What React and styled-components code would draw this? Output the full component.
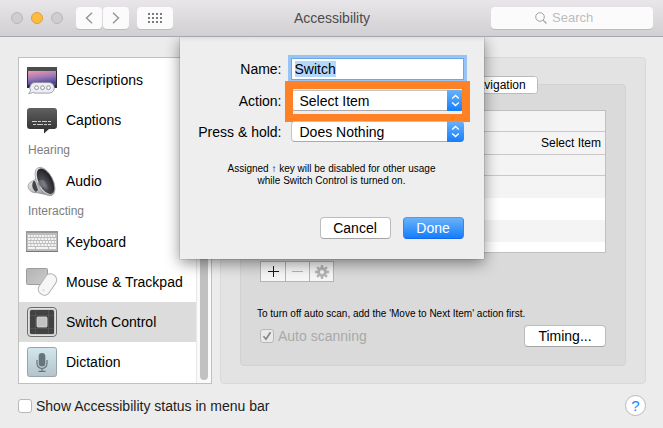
import React from "react";
import styled, { createGlobalStyle, css } from "styled-components";

const GlobalStyle = createGlobalStyle`
	* {
		box-sizing: border-box;
	}
	body {
		margin: 0;
		background: #ececec;
	}
	body, button, input, select {
		font-family: "Liberation Sans", Arial, sans-serif;
		font-size: 14px;
		line-height: 16px;
		color: #000;
	}
	svg {
		display: block;
		flex: none;
	}
`;

const Window = styled.div`
		position: relative;
		display: flex;
		flex-direction: column;
		min-height: 100vh;
		background: #ececec;
	`,
	Toolbar = styled.header`
		display: grid;
		grid-template-columns: 1fr auto 1fr;
		align-items: center;
		height: 37px;
		padding: 0 10px 0 11px;
		background: linear-gradient(#e8e6e9, #d1cfd2);
		border-bottom: 1px solid #a9a7ab;
	`,
	Title = styled.h1`
		margin: 0;
		font-size: 14px;
		font-weight: 400;
		color: #4c4b4d;
	`,
	ToolGroup = styled.div`
		display: flex;
		align-items: center;
	`,
	Light = styled.button`
		width: 12px;
		height: 12px;
		margin-right: 8px;
		padding: 0;
		border: 1px solid ${(p) => (p.$on ? "#dfa034" : "#b9b7ba")};
		border-radius: 50%;
		background: ${(p) => (p.$on ? "#fdbc40" : "#cfcdd0")};
	`,
	ToolButton = styled.button`
		display: flex;
		align-items: center;
		justify-content: center;
		width: ${(p) => (p.$wide ? 36 : 26)}px;
		height: 22px;
		margin-left: ${(p) => p.$gap || 0}px;
		padding: 0;
		border: 0;
		border-radius: 4px;
		background: #fcfbfc;
		box-shadow: 0 1px 0 #bcbabd;
		color: ${(p) => (p.$wide ? "#7b7a7c" : "#979698")};
	`,
	SearchBox = styled.label`
		display: flex;
		align-items: center;
		justify-content: center;
		justify-self: end;
		gap: 5px;
		width: 162px;
		height: 22px;
		border-radius: 4px;
		background: #fcfbfc;
		box-shadow: 0 1px 0 #bcbabd;
		color: #a3a2a4;
	`,
	SearchInput = styled.input`
		width: 57px;
		padding: 0;
		border: 0;
		outline: 0;
		background: none;
		font-size: 13px;

		&::placeholder {
			color: #bdbcbe;
			opacity: 1;
		}
	`;

const Content = styled.main`
		display: flex;
		gap: 8px;
		padding: 20px 17px 0 18px;
	`,
	Sidebar = styled.nav`
		display: flex;
		flex: none;
		width: 194px;
		border: 1px solid #c0c0c0;
		background: #fff;
	`,
	SideList = styled.div`
		flex: 1;
		padding-top: 2px;
	`,
	SideHeading = styled.h2`
		height: 21px;
		margin: 0;
		padding: 2px 0 0 9px;
		font-size: 12px;
		font-weight: 400;
		color: #7d7d7d;
	`,
	SideItem = styled.a`
		display: flex;
		align-items: center;
		gap: 8px;
		height: 40px;
		padding-left: 7px;
		background: ${(p) => (p.$active ? "#dcdcdc" : "none")};
		color: #000;
		text-decoration: none;
		white-space: nowrap;
	`,
	ScrollTrack = styled.div`
		display: flex;
		align-items: flex-end;
		justify-content: center;
		width: 15px;
		padding-bottom: 3px;
		border-left: 1px solid #e8e8e8;
		background: #fafafa;
	`,
	ScrollThumb = styled.div`
		width: 8px;
		height: 70%;
		border-radius: 4px;
		background: #c1c1c1;
	`;

const Panel = styled.section`
		display: flex;
		flex: 1;
		flex-direction: column;
		min-width: 0;
		padding: 18px 19px 17px;
		border: 1px solid #d9d9d9;
		border-radius: 4px;
		background: #e3e3e3;
	`,
	Tabs = styled.div`
		position: relative;
		display: flex;
		align-self: center;
		height: 18px;
		margin-bottom: -10px;
		border: 1px solid #bababa;
		border-radius: 4px;
		background: #fff;
		overflow: hidden;
	`,
	Tab = styled.button`
		padding: 0 11px;
		border: 0;
		border-right: 1px solid #d0d0d0;
		background: #fff;
		font-size: 12px;

		&:last-child {
			border-right: 0;
		}
	`,
	TabPanel = styled.div`
		flex: 1;
		padding: 25px 19px 18px;
		border: 1px solid #d2d2d2;
		border-radius: 4px;
		background: #dadada;
	`,
	SwitchTable = styled.table`
		width: 100%;
		border: 1px solid #c0c0c0;
		border-spacing: 0;
		background: #fff;
		font-size: 12px;
	`,
	Row = styled.tr`
		height: ${(p) => p.$h}px;
		background: ${(p) => (p.$shade ? "#f4f4f4" : "#fff")};

		td {
			padding: 0 4px;
			border-bottom: ${(p) => (p.$line ? "1px solid #c8c8c8" : "0")};
		}
		td:last-child {
			text-align: right;
		}
	`,
	EditBar = styled.div`
		display: flex;
		width: fit-content;
		margin-top: 8px;
		border: 1px solid #b4b4b4;
		background: #f6f6f6;
	`,
	EditButton = styled.button`
		display: flex;
		align-items: center;
		justify-content: center;
		width: 24px;
		height: 19px;
		padding: 0;
		border: 0;
		background: none;
		color: ${(p) => (p.disabled ? "#b5b5b5" : "#1a1a1a")};

		& + & {
			border-left: 1px solid #b4b4b4;
		}
	`,
	Note = styled.p`
		margin: 25px 0 4px -3px;
		font-size: 10px;
		line-height: 14px;
		white-space: nowrap;
	`,
	Split = styled.div`
		display: flex;
		align-items: center;
		justify-content: space-between;
	`,
	Footer = styled.footer`
		display: flex;
		align-items: center;
		justify-content: space-between;
		padding: 11px 17px 13px 18px;
	`,
	HelpButton = styled.button`
		width: 21px;
		height: 21px;
		padding: 0;
		border: 1px solid #b9b9b9;
		border-radius: 50%;
		background: #fff;
		font-size: 15px;
		color: #1a86fb;
	`;

const CheckLabel = styled.label`
		display: flex;
		align-items: center;
		gap: 4px;
		color: ${(p) => (p.$disabled ? "#a9a9a9" : "#1c1c1c")};
	`,
	CheckBox = styled.span`
		display: grid;
		place-items: center;

		> * {
			grid-area: 1 / 1;
		}
		svg {
			z-index: 1;
			pointer-events: none;
		}
	`,
	CheckInput = styled.input`
		appearance: none;
		width: 14px;
		height: 14px;
		margin: 0;
		border: 1px solid #b8b8b8;
		border-radius: 3px;
		background: ${(p) => (p.disabled ? "#e9e9e9" : "#fff")};
	`;

const Button = styled.button`
	height: 22px;
	padding: 0;
	width: ${(p) => p.$w}px;
	border: 1px solid #bcbcbc;
	border-bottom-color: #a5a5a5;
	border-radius: 4px;
	background: #fff;

	${(p) =>
		p.$primary &&
		css`
			border-color: #4a9df5 #2f86f5 #1467ee;
			background: linear-gradient(#69b2fa, #157efb);
			color: #fff;
		`}
`;

const SheetLayer = styled.div`
		position: absolute;
		top: 37px;
		left: 0;
		right: 0;
		display: flex;
		justify-content: center;
		overflow: hidden;
		padding-bottom: 30px;
		pointer-events: none;
	`,
	Sheet = styled.form`
		width: 304px;
		padding: 21px 20px 20px;
		background: linear-gradient(#e0e0e0, #eee 5px);
		box-shadow: 0 0 1px rgba(0, 0, 0, 0.5), 0 4px 14px rgba(0, 0, 0, 0.45);
		pointer-events: auto;
	`,
	Field = styled.div`
		display: grid;
		grid-template-columns: 82px 173px;
		align-items: center;
		justify-content: end;
		gap: 9px;
		margin-bottom: ${(p) => p.$after || 0}px;

		label {
			display: flex;
			justify-content: flex-end;
			white-space: nowrap;
		}
	`,
	NameInput = styled.input`
		width: 100%;
		height: 22px;
		padding: 0 3px;
		border: 1px solid #6ea7e8;
		outline: 0;
		background: #fff;
		box-shadow: 0 0 0 3px #98c4f5;

		&::selection {
			background: #b3d7ff;
			color: #000;
		}
	`,
	SelectWrap = styled.div`
		position: relative;
	`,
	Select = styled.select`
		appearance: none;
		display: block;
		width: 100%;
		height: 21px;
		padding: 0 20px 0 8px;
		border: 1px solid #c3c3c3;
		border-bottom-color: #aaa;
		border-radius: 4px;
		background: #fff;
	`,
	Stepper = styled.span`
		position: absolute;
		top: 0;
		right: 0;
		bottom: 0;
		display: flex;
		align-items: center;
		justify-content: center;
		width: 17px;
		border-radius: 0 4px 4px 0;
		background: linear-gradient(#69b2fa, #157efb);
		pointer-events: none;
	`,
	Highlight = styled.span`
		position: absolute;
		inset: -9px -6px -11px;
		border: 8px solid #ff8126;
		pointer-events: none;
	`,
	Hint = styled.p`
		margin: 21px 0 30px;
		font-size: 10px;
		line-height: 12px;
		text-align: center;
	`,
	Actions = styled.div`
		display: flex;
		justify-content: flex-end;
		gap: 12px;
	`;

const DescriptionsIcon = () => (
	<svg width="32" height="32" viewBox="0 0 32 32">
		<defs>
			<linearGradient id="sky" x1="0" y1="0" x2="0.3" y2="1">
				<stop offset="0" stopColor="#ee9bb0" />
				<stop offset="0.5" stopColor="#a57cb8" />
				<stop offset="1" stopColor="#4a4a9c" />
			</linearGradient>
		</defs>
		<path d="M1 3h30v21H1z" fill="#2b2b30" />
		<path d="M1 3h30v4H1z" fill="#4d4d4f" />
		<path d="M2 7h28v14H2z" fill="url(#sky)" />
		<path
			d="M10 18.500h13a5.300 5.300 0 0 1 0 10.600H10c-1.500 0-2.500-.2-3.500-.7-1 .8-2.300 1.200-4 1.200 1-.8 1.700-1.800 2-3.200A5.300 5.300 0 0 1 10 18.500z"
			fill="#ededf2"
			stroke="#8e8e98"
			strokeWidth="0.8"
		/>
		<g fill="#fff" stroke="#85858f" strokeWidth="0.9">
			<circle cx="10.500" cy="23.700" r="1.900" />
			<circle cx="16.500" cy="23.700" r="1.900" />
			<circle cx="22.500" cy="23.700" r="1.900" />
		</g>
	</svg>
);

const CaptionsIcon = () => (
	<svg width="32" height="32" viewBox="0 0 32 32">
		<defs>
			<linearGradient id="bubble" x1="0" y1="0" x2="0" y2="1">
				<stop offset="0" stopColor="#606060" />
				<stop offset="1" stopColor="#2d2d2d" />
			</linearGradient>
		</defs>
		<path
			d="M4 4h24a3 3 0 0 1 3 3v15a3 3 0 0 1-3 3h-5l-5 4.500V25H4a3 3 0 0 1-3-3V7a3 3 0 0 1 3-3z"
			fill="url(#bubble)"
		/>
		<path d="M6 17.500h20" stroke="#ccc" strokeDasharray="5 1 3 1" />
		<path d="M7 20.500h18" stroke="#ccc" strokeDasharray="3 1 6 1" />
	</svg>
);

const AudioIcon = () => (
	<svg width="32" height="32" viewBox="0 0 32 32">
		<defs>
			<linearGradient id="rim" x1="0" y1="0" x2="1" y2="1">
				<stop offset="0" stopColor="#f2f2f4" />
				<stop offset="0.6" stopColor="#b9b9be" />
				<stop offset="1" stopColor="#85858b" />
			</linearGradient>
			<radialGradient id="cone" cx="0.3" cy="0.6" r="0.7">
				<stop offset="0" stopColor="#898a90" />
				<stop offset="0.35" stopColor="#484a50" />
				<stop offset="1" stopColor="#1f2023" />
			</radialGradient>
		</defs>
		<path
			d="M10 14L4 17.500c-2.500 2-2.500 5.500 0 8 2 2 4.500 2.500 7 2.200L22 30z"
			fill="url(#rim)"
			stroke="#77777c"
			strokeWidth="0.6"
		/>
		<path d="M7.500 16c-2.500 4-1 8.500 2.500 11l2-2-3-9z" fill="#44454a" />
		<ellipse
			cx="19"
			cy="16.500"
			rx="8"
			ry="15.500"
			transform="rotate(-27 19 16.500)"
			fill="url(#rim)"
			stroke="#8b8b90"
			strokeWidth="0.6"
		/>
		<ellipse
			cx="19.500"
			cy="16.200"
			rx="6.800"
			ry="13.800"
			transform="rotate(-27 19.500 16.200)"
			fill="url(#cone)"
		/>
		<circle cx="15.500" cy="18.500" r="3.600" fill="#77797f" opacity="0.7" />
	</svg>
);

const KeyboardIcon = () => (
	<svg width="32" height="32" viewBox="0 0 32 32">
		<path d="M0 5h32v21H0z" fill="#999" />
		<path d="M1 7h30v18H1z" fill="#bdbdbd" />
		<path d="M0 25h32v1H0z" fill="#777" />
		<g stroke="#f4f4f4" strokeWidth="2">
			<path d="M2 10h28" strokeDasharray="2 0.8" />
			<path d="M2 13h28" strokeDasharray="2.500 0.8" />
			<path d="M2 16h28" strokeDasharray="2.200 0.8" />
			<path d="M2 19h28" strokeDasharray="2.500 0.8" />
			<path d="M2 22h7M10 22h12M23 22h7" />
		</g>
	</svg>
);

const MouseIcon = () => (
	<svg width="32" height="32" viewBox="0 0 32 32">
		<defs>
			<linearGradient id="pad" x1="0" y1="0" x2="1" y2="1">
				<stop offset="0" stopColor="#b3b3b3" />
				<stop offset="1" stopColor="#cbcbcb" />
			</linearGradient>
		</defs>
		<rect x="0.500" y="2.500" width="21" height="16" rx="1" fill="url(#pad)" stroke="#9d9d9d" />
		<rect
			x="15.500"
			y="7"
			width="12"
			height="23"
			rx="5.500"
			transform="rotate(34 21.500 18.500)"
			fill="#f6f6f6"
			stroke="#b4b4b4"
		/>
		<circle cx="17.500" cy="24" r="1" fill="#d4d4d4" />
	</svg>
);

const SwitchIcon = () => (
	<svg width="32" height="32" viewBox="0 0 32 32">
		<rect x="1.500" y="1.500" width="29" height="29" rx="3.500" fill="#c9c9c9" stroke="#6b6b6b" />
		<rect x="2.500" y="2.500" width="27" height="27" rx="3" fill="none" stroke="#e2e2e2" />
		<rect x="4" y="4" width="24" height="24" rx="1.500" fill="#424243" />
		<path d="M9.500 4v24M22.500 4v24M4 9.500h24M4 22.500h24" stroke="#5c5c5c" strokeWidth="0.6" />
		<rect x="11" y="11" width="10" height="10" rx="1" fill="#c2c2c2" stroke="#dadada" strokeWidth="0.8" />
	</svg>
);

const DictationIcon = () => (
	<svg width="32" height="32" viewBox="0 0 32 32">
		<defs>
			<linearGradient id="tile" x1="0" y1="0" x2="0" y2="1">
				<stop offset="0" stopColor="#d3e7ee" />
				<stop offset="1" stopColor="#b4c3c8" />
			</linearGradient>
		</defs>
		<rect x="1.500" y="1.500" width="29" height="29" rx="2" fill="url(#tile)" stroke="#96a5aa" />
		<rect x="12.700" y="7" width="6.600" height="13.500" rx="3.300" fill="#66757b" />
		<path
			d="M11 14v3.500a5 5 0 0 0 10 0V14M16 22.500V25M12.500 25.300h7"
			fill="none"
			stroke="#66757b"
			strokeWidth="1.200"
		/>
	</svg>
);

const Chevron = ({ right }) => (
	<svg width="8" height="12" viewBox="0 0 8 12">
		<path
			d={right ? "M1 0.800L6.500 6 1 11.200" : "M7 0.800L1.500 6 7 11.200"}
			fill="none"
			stroke="currentColor"
			strokeWidth="1.500"
		/>
	</svg>
);

const GridIcon = () => (
	<svg width="14" height="10" viewBox="0 0 14 10" fill="currentColor">
		{[0, 4, 8].map((y) =>
			[0, 4, 8, 12].map((x) => <rect key={`${x}-${y}`} x={x} y={y} width="2" height="2" />),
		)}
	</svg>
);

const SearchIcon = () => (
	<svg width="12" height="12" viewBox="0 0 12 12" fill="none" stroke="currentColor">
		<circle cx="5" cy="5" r="4.300" />
		<path d="M8.100 8.100L11.500 11.500" strokeWidth="1.200" />
	</svg>
);

const GearIcon = () => (
	<svg width="14" height="14" viewBox="0 0 14 14">
		<g stroke="currentColor" strokeWidth="2.400">
			{[0, 45, 90, 135].map((a) => (
				<path key={a} d="M7 0v3.500M7 10.500v3.500" transform={`rotate(${a} 7 7)`} />
			))}
		</g>
		<circle cx="7" cy="7" r="3.500" fill="none" stroke="currentColor" strokeWidth="2.800" />
	</svg>
);

const Arrows = () => (
	<Stepper>
		<svg width="9" height="13" viewBox="0 0 9 13" fill="none" stroke="#fff" strokeWidth="1.400">
			<path d="M1.200 4.500L4.500 1.500 7.800 4.500M1.200 8.500L4.500 11.500 7.800 8.500" />
		</svg>
	</Stepper>
);

const sections = [
	{
		items: [
			{ name: "Descriptions", Icon: DescriptionsIcon },
			{ name: "Captions", Icon: CaptionsIcon },
		],
	},
	{ heading: "Hearing", items: [{ name: "Audio", Icon: AudioIcon }] },
	{
		heading: "Interacting",
		items: [
			{ name: "Keyboard", Icon: KeyboardIcon },
			{ name: "Mouse & Trackpad", Icon: MouseIcon },
			{ name: "Switch Control", Icon: SwitchIcon },
			{ name: "Dictation", Icon: DictationIcon },
		],
	},
];

const rows = [
	{ h: 21, shade: true, line: true },
	{ h: 23, shade: true, line: true, action: "Select Item" },
	{ h: 21, shade: true, line: true },
	{ h: 22, shade: true },
	{ h: 22 },
	{ h: 22, shade: true },
	{ h: 10 },
];

const SwitchSheet = () => {
	const nameRef = React.useRef(null);

	React.useEffect(() => {
		nameRef.current.focus();
		nameRef.current.select();
	}, []);

	return (
		<SheetLayer>
			<Sheet onSubmit={(e) => e.preventDefault()}>
				<Field $after={10}>
					<label htmlFor="name">Name:</label>
					<NameInput id="name" ref={nameRef} defaultValue="Switch" />
				</Field>
				<Field $after={10}>
					<label htmlFor="action">Action:</label>
					<SelectWrap>
						<Select id="action">
							<option>Select Item</option>
						</Select>
						<Arrows />
						<Highlight />
					</SelectWrap>
				</Field>
				<Field>
					<label htmlFor="hold">Press &amp; hold:</label>
					<SelectWrap>
						<Select id="hold">
							<option>Does Nothing</option>
						</Select>
						<Arrows />
					</SelectWrap>
				</Field>
				<Hint>
					Assigned ↑ key will be disabled for other usage
					<br />
					while Switch Control is turned on.
				</Hint>
				<Actions>
					<Button type="button" $w={71}>
						Cancel
					</Button>
					<Button type="submit" $w={61} $primary>
						Done
					</Button>
				</Actions>
			</Sheet>
		</SheetLayer>
	);
};

const App = () => {
	return (
		<>
			<GlobalStyle />
			<Window>
				<Toolbar>
					<ToolGroup>
						<Light aria-label="Close" />
						<Light aria-label="Minimize" $on />
						<Light aria-label="Zoom" />
						<ToolButton aria-label="Back" $gap={5}>
							<Chevron />
						</ToolButton>
						<ToolButton aria-label="Forward" $gap={1}>
							<Chevron right />
						</ToolButton>
						<ToolButton aria-label="Show all" $wide $gap={8}>
							<GridIcon />
						</ToolButton>
					</ToolGroup>
					<Title>Accessibility</Title>
					<SearchBox>
						<SearchIcon />
						<SearchInput type="text" placeholder="Search" aria-label="Search" />
					</SearchBox>
				</Toolbar>

				<Content>
					<Sidebar>
						<SideList>
							{sections.map(({ heading, items }) => (
								<React.Fragment key={items[0].name}>
									{heading && <SideHeading>{heading}</SideHeading>}
									{items.map(({ name, Icon }) => (
										<SideItem key={name} href="#" $active={name === "Switch Control"}>
											<Icon />
											{name}
										</SideItem>
									))}
								</React.Fragment>
							))}
						</SideList>
						<ScrollTrack>
							<ScrollThumb />
						</ScrollTrack>
					</Sidebar>

					<Panel>
						<Tabs>
							<Tab>Usage</Tab>
							<Tab>Switches</Tab>
							<Tab>Navigation</Tab>
						</Tabs>
						<TabPanel>
							<SwitchTable>
								<tbody>
									{rows.map((row, i) => (
										<Row key={i} $h={row.h} $shade={row.shade} $line={row.line}>
											<td />
											<td>{row.action}</td>
										</Row>
									))}
								</tbody>
							</SwitchTable>
							<EditBar>
								<EditButton aria-label="Add">
									<svg width="11" height="11" viewBox="0 0 11 11" stroke="currentColor">
										<path d="M5.500 0v11M0 5.500h11" />
									</svg>
								</EditButton>
								<EditButton aria-label="Remove" disabled>
									<svg width="11" height="11" viewBox="0 0 11 11" stroke="currentColor">
										<path d="M0 5.500h11" />
									</svg>
								</EditButton>
								<EditButton aria-label="Options" disabled>
									<GearIcon />
								</EditButton>
							</EditBar>
							<Note>To turn off auto scan, add the 'Move to Next Item' action first.</Note>
							<Split>
								<CheckLabel $disabled>
									<CheckBox>
										<CheckInput type="checkbox" defaultChecked disabled />
										<svg width="10" height="10" viewBox="0 0 10 10">
											<path
												d="M1.500 5.300L4 8.200 8.500 1.300"
												fill="none"
												stroke="#858585"
												strokeWidth="1.700"
											/>
										</svg>
									</CheckBox>
									Auto scanning
								</CheckLabel>
								<Button $w={82}>Timing...</Button>
							</Split>
						</TabPanel>
					</Panel>
				</Content>

				<Footer>
					<CheckLabel>
						<CheckInput type="checkbox" />
						Show Accessibility status in menu bar
					</CheckLabel>
					<HelpButton aria-label="Help">?</HelpButton>
				</Footer>

				<SwitchSheet />
			</Window>
		</>
	);
};

export default App;
